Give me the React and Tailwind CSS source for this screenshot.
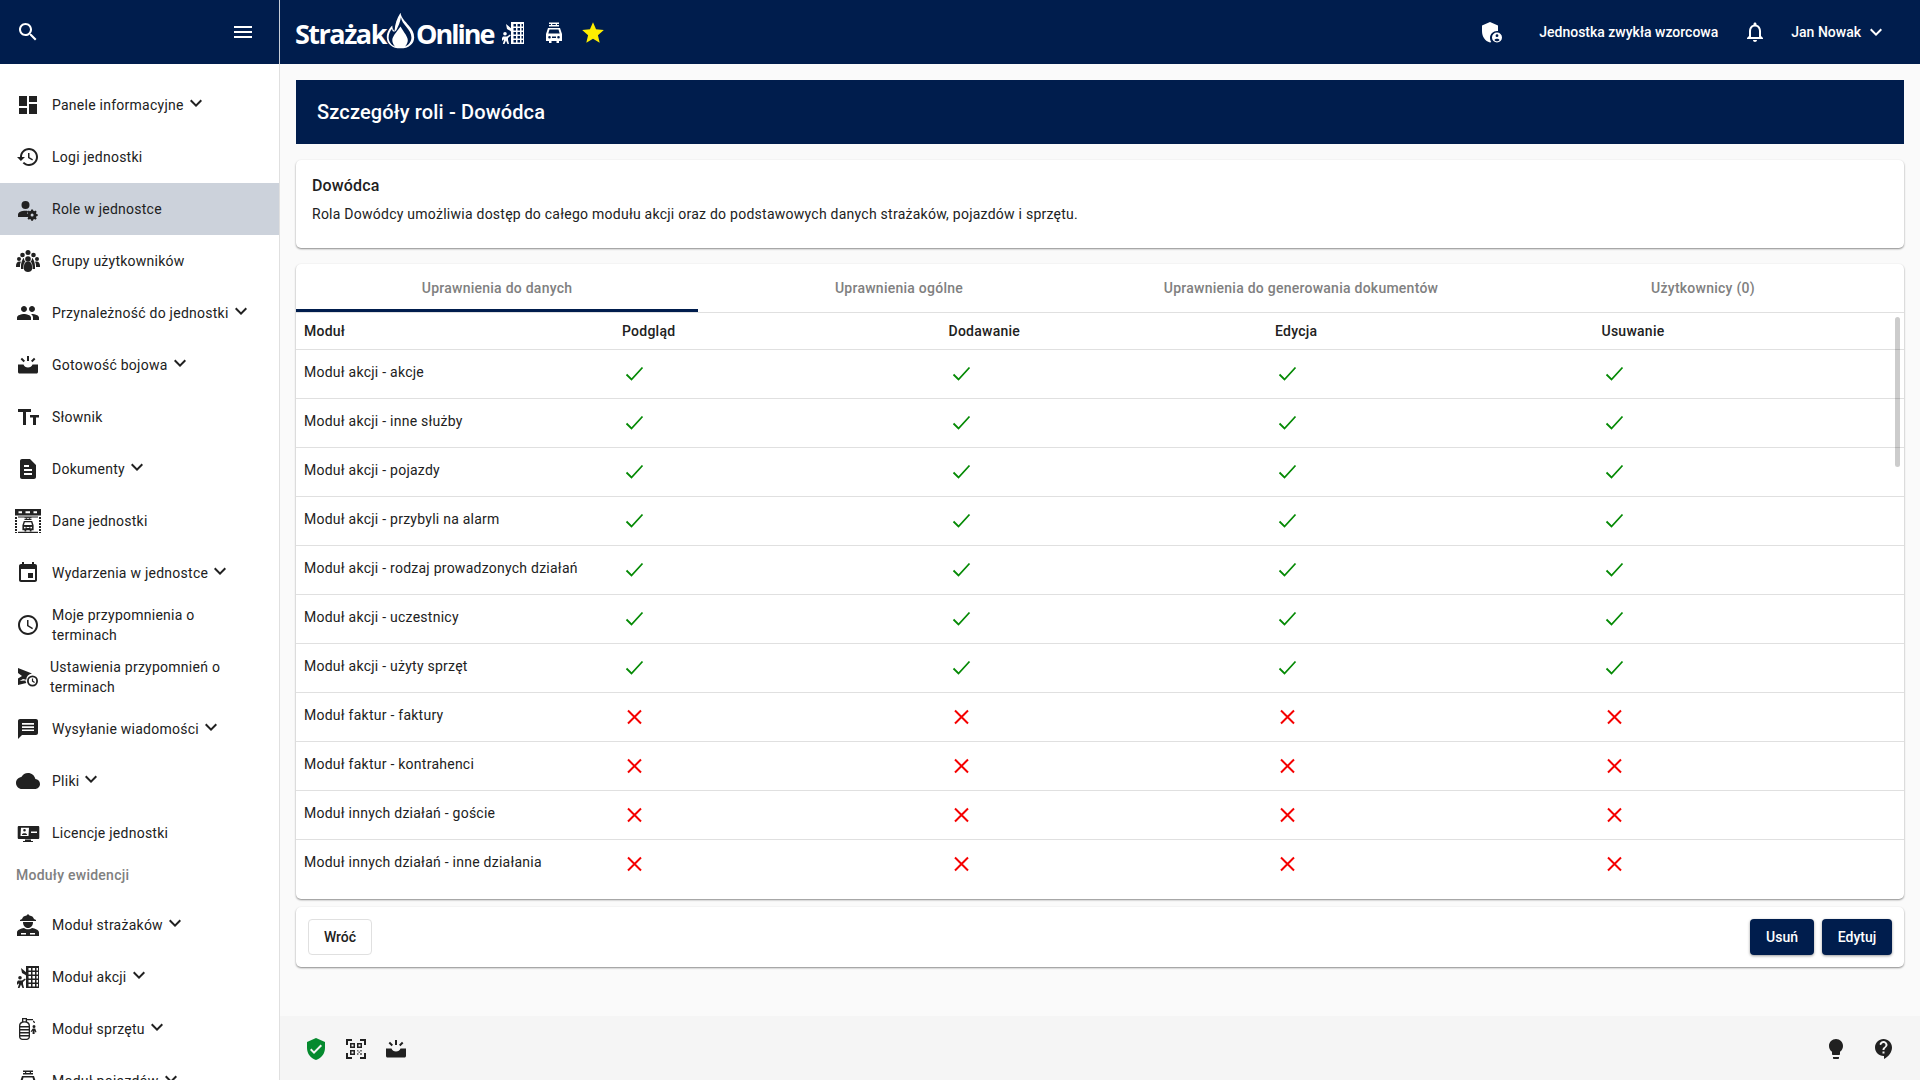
import React from "react";

const Icon = ({ size = 24, className = "", children }) => (
  <svg viewBox="0 0 24 24" width={size} height={size} fill="currentColor" className={`shrink-0 ${className}`}>
    {children}
  </svg>
);

const P = ({ d }) => <path d={d} />;

const Chevron = ({ className = "" }) => (
  <Icon className={className}>
    <P d="M16.59 8.59L12 13.17 7.41 8.59 6 10l6 6 6-6z" />
  </Icon>
);

const Alert = () => (
  <>
    <path d="M11 3h2v5h-2zM4.6 6.2l1.4-1.4 3 3-1.4 1.4zM15 7.800l3-3 1.400 1.400-3 3z" />
    <path d="M2 11.500h5.500c.6 2 2.400 3 4.500 3s3.900-1 4.500-3H22V19c0 .8-.7 1.500-1.500 1.500h-17C2.700 20.500 2 19.800 2 19z" />
  </>
);

const Truck = () => (
  <>
    <path d="M7 1.500h10v1.500H7zM7 4h10v1.500H7zM9 3h1.200v1H9zM13.800 3H15v1h-1.200z" />
    <path fillRule="evenodd" d="M6 7h12l2 6v7h-3v2h-2.500v-2h-5v2H7v-2H4v-7zm1.500 1.500L6.300 12.500h11.400L16.500 8.500zM7.500 15a1.300 1.300 0 100 2.600 1.300 1.300 0 000-2.600zm9 0a1.300 1.300 0 100 2.600 1.300 1.300 0 000-2.600zM10 15.500v1.500h4v-1.500z" />
  </>
);

const Building = () => (
  <>
    <path fillRule="evenodd" d="M10 1h13v22H10zm2.500 2v2.500H15V3zm4 0v2.500H19V3zm-4 4v2.500H15V7zm4 0v2.500H19V7zm4-4v2.500H22V3zm0 4v2.500H22V7zm-8 4v2.500H15V11zm4 0v2.500H19V11zm4 0v2.500H22V11zm-8 4v2.500H15V15zm4 0v2.500H19V15zm4 0v2.500H22V15zm-8 4v2.500H15V19zm4 0v2.500H19V19zm4 0v2.500H22V19z" />
    <path d="M4 11a1.800 1.800 0 110 3.600A1.800 1.800 0 014 11zM2 15.500h4l3-2 .8 1L7 17v2l1 4H6.500L5 19.500 3.500 23H1.800L3 19l-.5-.5L1 20v-3z" />
    <path d="M5 3l6 5 1.500 6-3-4L6 8z" />
  </>
);

const Bulb = () => <P d="M9 21c0 .55.45 1 1 1h4c.55 0 1-.45 1-1v-1H9v1zm3-19C8.14 2 5 5.14 5 9c0 2.38 1.19 4.47 3 5.74V17c0 .55.45 1 1 1h6c.55 0 1-.45 1-1v-2.260c1.810-1.270 3-3.360 3-5.740 0-3.860-3.140-7-7-7z" />;

const menuItems = [
  { label: "Panele informacyjne", more: true, icon: <P d="M3 13h8V3H3v10zm0 8h8v-6H3v6zm10 0h8V11h-8v10zm0-18v6h8V3h-8z" /> },
  { label: "Logi jednostki", icon: <P d="M13 3c-4.970 0-9 4.030-9 9H1l3.890 3.890.07.14L9 12H6c0-3.870 3.130-7 7-7s7 3.130 7 7-3.130 7-7 7c-1.930 0-3.680-.79-4.940-2.060l-1.420 1.420C8.270 19.990 10.510 21 13 21c4.970 0 9-4.030 9-9s-4.030-9-9-9zm-1 5v5l4.280 2.540.72-1.210-3.500-2.080V8H12z" /> },
  {
    label: "Role w jednostce",
    active: true,
    icon: (
      <>
        <circle cx="9.500" cy="8" r="4" />
        <path d="M2 20v-2.500c0-2.300 3.500-3.800 7.500-3.800 1 0 1.700.1 2.500.2-.4.900-.6 1.900-.6 2.900 0 1.200.3 2.200.8 3.200z" />
        <path fillRule="evenodd" d="M17 12.500l.3 1.300 1 .4 1.100-.7 1.300 1.300-.7 1.100.4 1 1.300.3v1.800l-1.300.3-.4 1 .7 1.100-1.300 1.300-1.100-.7-1 .4-.3 1.300h-1.800l-.3-1.300-1-.4-1.100.7-1.300-1.300.7-1.100-.4-1-1.300-.3v-1.800l1.300-.3.4-1-.7-1.100 1.300-1.300 1.100.7 1-.4.3-1.300zm-.9 3.900a1.500 1.500 0 100 3 1.500 1.500 0 000-3z" />
      </>
    ),
  },
  {
    label: "Grupy użytkowników",
    icon: (
      <>
        <circle cx="12" cy="3.500" r="2.500" />
        <circle cx="6.500" cy="6" r="2.300" />
        <circle cx="17.500" cy="6" r="2.300" />
        <circle cx="3" cy="10" r="2" />
        <circle cx="21" cy="10" r="2" />
        <circle cx="12" cy="10" r="2.800" />
        <path d="M0 17c0-2.500 1.200-4.500 3.500-4.500.8 0 1.200.2 1.500.4-.8 1-1 2.600-1 4.100v1H0zM24 17c0-2.500-1.200-4.500-3.500-4.500-.8 0-1.200.2-1.500.4.8 1 1 2.600 1 4.100v1h4zM5 17c0-3 1.500-7.500 3-8 0 2 .5 3 1.500 3.500C8 13.500 7.500 15.500 7.500 18v2H5zM19 17c0-3-1.500-7.500-3-8 0 2-.5 3-1.500 3.500 1.500 1 2 3 2 5.500v2H19zM8 17c0-2.500 1.500-4.500 4-4.500s4 2 4 4.500v3.500c0 1-2 2.500-4 2.500s-4-1.500-4-2.500z" />
      </>
    ),
  },
  { label: "Przynależność do jednostki", more: true, icon: <P d="M16 11c1.660 0 2.990-1.340 2.990-3S17.660 5 16 5c-1.660 0-3 1.340-3 3s1.340 3 3 3zm-8 0c1.660 0 2.990-1.340 2.990-3S9.660 5 8 5C6.340 5 5 6.340 5 8s1.340 3 3 3zm0 2c-2.330 0-7 1.170-7 3.500V19h14v-2.500c0-2.330-4.670-3.500-7-3.500zm8 0c-.29 0-.62.02-.97.05 1.160.84 1.970 1.970 1.970 3.450V19h6v-2.500c0-2.330-4.670-3.500-7-3.500z" /> },
  { label: "Gotowość bojowa", more: true, icon: <Alert /> },
  { label: "Słownik", icon: <P d="M2 4h13v3h-5v13H7V7H2zm12 6h9v2.500h-3V20h-3v-7.500h-3z" /> },
  { label: "Dokumenty", more: true, icon: <path fillRule="evenodd" d="M6 2h8l6 6v12c0 1.100-.9 2-2 2H6c-1.100 0-2-.9-2-2V4c0-1.100.9-2 2-2zM8 8v2h5V8zm0 4v2h8v-2zm0 4v2h8v-2z" /> },
  {
    label: "Dane jednostki",
    icon: (
      <>
        <path fillRule="evenodd" d="M-1 0h26v6.500H-1zM2.500 2.200v2h3.500v-2zm7 0v2h4.500v-2zm8 0v2h3.500v-2z" />
        <path d="M-1 8h2v2H-1zM-1 11h2v2H-1zM-1 14h2v2H-1zM-1 17h2v2H-1zM-1 20h2v2H-1zM-1 23h2v1H-1zM23 8h2v2h-2zM23 11h2v2h-2zM23 14h2v2h-2zM23 17h2v2h-2zM23 20h2v2h-2zM23 23h2v1h-2z" />
        <path d="M2 7.500h20v1H2zM2 22.800h20v1.200H2z" />
        <g transform="translate(3.600 7.200) scale(.7)">
          <Truck />
        </g>
      </>
    ),
  },
  { label: "Wydarzenia w jednostce", more: true, icon: <P d="M17 12h-5v5h5v-5zM16 1v2H8V1H6v2H5c-1.110 0-1.990.9-1.990 2L3 19c0 1.100.89 2 2 2h14c1.100 0 2-.9 2-2V5c0-1.100-.9-2-2-2h-1V1h-2zm3 18H5V8h14v11z" /> },
  { label: "Moje przypomnienia o terminach", wrap: true, icon: <P d="M11.990 2C6.470 2 2 6.480 2 12s4.470 10 9.990 10C17.520 22 22 17.520 22 12S17.520 2 11.990 2zM12 20c-4.420 0-8-3.580-8-8s3.580-8 8-8 8 3.580 8 8-3.580 8-8 8zm.5-13H11v6l5.250 3.150.75-1.230-4.500-2.670z" /> },
  {
    label: "Ustawienia przypomnień o terminach",
    wrap: true,
    shift: true,
    icon: (
      <>
        <path d="M2 3l14 5.500a7 7 0 00-5.800 6.200L7 14l-5 3v-3.500L6 11 2 8z" />
        <path fillRule="evenodd" d="M16.500 10.500a5.500 5.500 0 110 11 5.500 5.500 0 010-11zm0 1.800a3.700 3.700 0 100 7.400 3.700 3.700 0 000-7.400zm-.6 1.200h1.200v2.300l1.800 1.100-.6 1-2.400-1.400z" />
        <path d="M2 16l7.500-.5c.1.900.3 1.800.8 2.500L2 20z" />
      </>
    ),
  },
  { label: "Wysyłanie wiadomości", more: true, icon: <path fillRule="evenodd" d="M20 2H4c-1.100 0-1.990.9-1.990 2L2 22l4-4h14c1.100 0 2-.9 2-2V4c0-1.100-.9-2-2-2zM6 6v1.700h12V6zm0 3.200v1.700h12V9.200zm0 3.200v1.700h12v-1.700z" /> },
  { label: "Pliki", more: true, icon: <P d="M19.350 10.040C18.670 6.590 15.640 4 12 4 9.110 4 6.600 5.640 5.350 8.040 2.340 8.360 0 10.910 0 14c0 3.310 2.690 6 6 6h13c2.760 0 5-2.240 5-5 0-2.640-2.050-4.780-4.650-4.960z" /> },
  {
    label: "Licencje jednostki",
    icon: (
      <>
        <path fillRule="evenodd" d="M3 5h19c.8 0 1.300.5 1.300 1.300v10.400c0 .8-.5 1.300-1.300 1.300H3c-.8 0-1.300-.5-1.300-1.300V6.300C1.700 5.500 2.200 5 3 5zm2 1.800l-.5 8.200h8l.5-8.200zm10 3.700V12h6v-1.500z" />
        <path d="M9 18.500h6V20h2v1H7v-1h2z" />
        <path d="M8.500 8a1.300 1.300 0 110 2.600 1.300 1.300 0 010-2.600zM6 13.500c.5-1.800 4.500-1.800 5 0v.5H6z" />
      </>
    ),
  },
];

const moduleItems = [
  {
    label: "Moduł strażaków",
    icon: (
      <>
        <path d="M12 1l1.500 1.500c2.300.3 3.900 1.500 4.500 3.500l2 1v1H4V7l2-1c.6-2 2.200-3.200 4.500-3.500z" />
        <path d="M7 9h10c0 3.500-2 6-5 6s-5-2.500-5-6z" />
        <path fillRule="evenodd" d="M8 15c1 .8 2.500 1.300 4 1.300s3-.5 4-1.300c3 .5 7 2 7 4.500V23H1v-3.500C1 17 5 15.500 8 15zm-3 5v1.500h5V20zm9 0v1.500h5V20z" />
      </>
    ),
  },
  { label: "Moduł akcji", icon: <Building /> },
  {
    label: "Moduł sprzętu",
    icon: (
      <>
        <path fillRule="evenodd" d="M6 1h5v3.500c2.200.8 3 2.500 3 4.500v10.500c0 2-1.500 3.500-3.500 3.500h-4C4.500 23 3 21.500 3 19.500V9c0-2 .8-3.700 3-4.500zm1.300 1.300v2h2.400v-2zM8.500 5.500C6 5.500 4.300 7 4.300 9h8.400c0-2-1.700-3.500-4.200-3.500zM4.300 10.500V12h8.400v-1.500zm0 3V15h8.400v-1.500zm0 3V18h8.400v-1.500zm0 3c0 1.300.9 2.200 2.200 2.200h4c1.300 0 2.200-.9 2.200-2.200z" />
        <path d="M11 2h6v1.200h-6zM17 3.500c1.500.5 2 1.500 2 2.500h-1.200c0-.6-.4-1.100-.8-1.300zM18 8a1.500 1.500 0 110 3 1.500 1.500 0 010-3zm-1.200 3.500h2.400l1.300 3.500-1.100.4-.8-2V17h-2v-3.500l-1 1.500-1-.6z" />
      </>
    ),
  },
  { label: "Moduł pojazdów", icon: <Truck /> },
];

const MenuItem = ({ item }) => (
  <div className={`flex h-[52px] items-center pl-4 ${item.active ? "bg-[#ccd2db]" : ""}`}>
    <Icon className="overflow-visible text-[#212121]">{item.icon}</Icon>
    <span
      className={`text-[14px] leading-5 text-[#212121] ${item.shift ? "ml-[10px]" : "ml-3"} ${item.wrap ? "w-[180px]" : ""}`}
    >
      {item.label}
    </span>
    {item.more && <Chevron className="-mt-1 text-[#212121]" />}
  </div>
);

const rows = [
  ["Moduł akcji - akcje", true],
  ["Moduł akcji - inne służby", true],
  ["Moduł akcji - pojazdy", true],
  ["Moduł akcji - przybyli na alarm", true],
  ["Moduł akcji - rodzaj prowadzonych działań", true],
  ["Moduł akcji - uczestnicy", true],
  ["Moduł akcji - użyty sprzęt", true],
  ["Moduł faktur - faktury", false],
  ["Moduł faktur - kontrahenci", false],
  ["Moduł innych działań - goście", false],
  ["Moduł innych działań - inne działania", false],
];

const Yes = () => (
  <svg viewBox="0 0 24 24" width="24" height="24" fill="none" stroke="#058a05" strokeWidth="1.800">
    <path d="M4.500 12.500l5 5 11-12" />
  </svg>
);

const No = () => (
  <svg viewBox="0 0 24 24" width="24" height="24" fill="none" stroke="#f50000" strokeWidth="2">
    <path d="M6 5.500l13 13M19 5.500l-13 13" />
  </svg>
);

const tabs = ["Uprawnienia do danych", "Uprawnienia ogólne", "Uprawnienia do generowania dokumentów", "Użytkownicy (0)"];

const gridCols = "grid grid-cols-[326px_326.5px_326.5px_326.5px_1fr]";

const cardClass = "rounded-[5px] bg-white shadow-[0_1px_2px_rgba(0,0,0,0.45)]";

function App() {
  return (
    <div className="flex h-screen flex-col overflow-hidden bg-[#fafafa] text-[14px] tracking-[0.25px] text-[#212121] [font-family:Roboto,sans-serif]">
      <header className="flex h-16 shrink-0 items-center bg-[#001d4d] tracking-normal text-white">
        <div className="flex h-full w-[280px] shrink-0 items-center justify-between border-r border-[#c8ced8] pl-4 pr-6">
          <Icon>
            <P d="M15.500 14h-.79l-.28-.27C15.410 12.590 16 11.110 16 9.500 16 5.910 13.090 3 9.500 3S3 5.910 3 9.500 5.910 16 9.500 16c1.610 0 3.090-.59 4.230-1.570l.27.28v.79l5 4.990L20.490 19l-4.990-5zm-6 0C7.010 14 5 11.990 5 9.500S7.010 5 9.500 5 14 7.010 14 9.500 11.990 14 9.500 14z" />
          </Icon>
          <Icon>
            <P d="M3 18h18v-2H3v2zm0-5h18v-2H3v2zm0-7v2h18V6H3z" />
          </Icon>
        </div>
        <div className="ml-[15px] mt-[2px] flex items-center">
          <span className="w-[90px] text-[27px] font-bold leading-none tracking-[-1.5px] [font-family:'Open_Sans',sans-serif]">Strażak</span>
          <svg viewBox="0 0 34 40" width="31" height="38" fill="white" className="-mt-1 shrink-0">
            <path fillRule="evenodd" d="M17 0c1 6 5 9 9 14 3.500 4 6 8 6 13 0 7-6 12-15 12S2 34 2 27c0-6 3-10 6-13 0 3 1 5 2.500 6C11 12 13 6 17 0zm.5 5c-1 6-3 10-4.500 13-1 2-2.500 3-4 2.500-1-.5-1-2-1.200-3C5.500 20 4 23.500 4 27c0 4 2.500 8 7 10-2-2-3-4.500-3-7 0-4 4-8 9-15 4 7 8 11 8 15 0 2.500-1 5-3 7 4.500-2 7-6 7-10 0-4-2.500-8-5.500-11.500C20.500 12 18 9 17.500 5z" />
          </svg>
          <span className="w-[76px] text-[27px] font-bold leading-none tracking-[-2px] [font-family:'Open_Sans',sans-serif]">Online</span>
          <Icon className="ml-[9px]">
            <Building />
          </Icon>
          <Icon className="ml-[17px]">
            <Truck />
          </Icon>
          <Icon size={26} className="ml-[14px] text-[#ffee00]">
            <P d="M12 17.270L18.180 21l-1.640-7.030L22 9.240l-7.190-.61L12 2 9.190 8.630 2 9.240l5.460 4.730L5.820 21z" />
          </Icon>
        </div>
        <div className="ml-auto flex items-center pr-[32px] font-medium">
          <Icon>
            <path fillRule="evenodd" d="M11 2l8 3.500V11c-.3 0-.6-.1-1-.1-3.800 0-7 3.200-7 7 0 1.500.5 3 1.300 4.100l-1.300.5C6 21.200 3 16.500 3 11V5.500zm7 10.500a5 5 0 110 10 5 5 0 010-10zm0 1.800a1.400 1.400 0 100 2.800 1.400 1.400 0 000-2.800zm-2.600 5.600c.5.800 1.500 1.300 2.600 1.300s2.100-.5 2.600-1.300c-.5-.7-1.500-1.100-2.600-1.100s-2.100.4-2.600 1.100z" />
          </Icon>
          <span className="ml-[36px]">Jednostka zwykła wzorcowa</span>
          <Icon className="ml-[25px]">
            <P d="M12 22c1.100 0 2-.9 2-2h-4c0 1.100.9 2 2 2zm6-6v-5c0-3.070-1.630-5.640-4.500-6.320V4c0-.83-.67-1.500-1.500-1.500s-1.500.67-1.500 1.500v.68C7.640 5.360 6 7.920 6 11v5l-2 2v1h16v-1l-2-2zm-2 1H8v-6c0-2.480 1.510-4.500 4-4.500s4 2.020 4 4.500v6z" />
          </Icon>
          <span className="ml-[24px]">Jan Nowak</span>
          <Chevron className="ml-[3px]" />
        </div>
      </header>

      <div className="flex min-h-0 flex-1">
        <aside className="w-[280px] shrink-0 overflow-hidden border-r border-[#e0e0e0] bg-white pt-[15px]">
          {menuItems.map((item) => (
            <MenuItem key={item.label} item={item} />
          ))}
          <div className="h-10 pl-4 pt-[6px] text-[14px] font-medium leading-5 text-[#808080]">Moduły ewidencji</div>
          {moduleItems.map((item) => (
            <MenuItem key={item.label} item={{ ...item, more: true }} />
          ))}
        </aside>

        <main className="flex min-w-0 flex-1 flex-col">
          <div className="flex-1 px-4 pt-4">
            <div className="flex h-16 items-center bg-[#001d4d] pl-[21px] text-[20px] font-medium tracking-[0.15px] text-white">Szczegóły roli - Dowódca</div>

            <section className={`mt-4 h-[88px] px-4 pt-4 ${cardClass}`}>
              <h2 className="text-[16px] font-medium leading-5 tracking-[0.15px]">Dowódca</h2>
              <p className="mt-2 leading-5">Rola Dowódcy umożliwia dostęp do całego modułu akcji oraz do podstawowych danych strażaków, pojazdów i sprzętu.</p>
            </section>

            <section className={`relative mt-4 h-[635px] overflow-hidden ${cardClass}`}>
              <div className="grid h-[49px] grid-cols-4 border-b border-[#e0e0e0]">
                {tabs.map((tab, i) => (
                  <div
                    key={tab}
                    className={`flex h-[48px] items-center justify-center font-medium text-[#808080] ${i === 0 ? "border-b-[3px] border-[#001d4d] pt-[3px]" : ""}`}
                  >
                    {tab}
                  </div>
                ))}
              </div>
              <div className={`${gridCols} h-[37px] items-center border-b border-[#e0e0e0] font-medium`}>
                <div className="pl-2">Moduł</div>
                <div>Podgląd</div>
                <div>Dodawanie</div>
                <div>Edycja</div>
                <div>Usuwanie</div>
              </div>
              {rows.map(([name, allowed], i) => (
                <div key={name} className={`${gridCols} h-[49px] ${i < rows.length - 1 ? "border-b border-[#e0e0e0]" : ""}`}>
                  <div className="pl-2 pt-3 leading-5">{name}</div>
                  {[0, 1, 2, 3].map((col) => (
                    <div key={col} className="pt-3">
                      {allowed ? <Yes /> : <No />}
                    </div>
                  ))}
                </div>
              ))}
              <div className="absolute right-1 top-[53px] h-[150px] w-[5px] rounded bg-black/20" />
            </section>

            <section className={`mt-2 flex h-[60px] items-center justify-between px-3 font-medium tracking-normal ${cardClass}`}>
              <button className="h-9 w-16 rounded border border-[#e0e0e0] bg-white">Wróć</button>
              <div className="flex gap-2 text-white">
                <button className="h-9 w-16 rounded bg-[#001d4d] shadow-[0_1px_3px_rgba(0,0,0,0.4)]">Usuń</button>
                <button className="h-9 w-[70px] rounded bg-[#001d4d] shadow-[0_1px_3px_rgba(0,0,0,0.4)]">Edytuj</button>
              </div>
            </section>
          </div>

          <footer className="flex h-16 shrink-0 items-center justify-between bg-[#f5f5f5] pl-[24px] pr-[24px] pt-[2px]">
            <div className="flex items-center gap-4">
              <Icon className="text-[#058a2e]">
                <path fillRule="evenodd" d="M12 1l9 4v6c0 5.550-3.840 10.740-9 12-5.160-1.260-9-6.450-9-12V5zm-2 16l8-8-1.410-1.420L10 14.170l-2.590-2.580L6 13z" />
              </Icon>
              <Icon>
                <path d="M2 2h6v2H4v4H2zM16 2h6v6h-2V4h-4zM2 16h2v4h4v2H2zM20 16h2v6h-6v-2h4z" />
                <path fillRule="evenodd" d="M6 6h5v5H6zm1.500 1.500v2h2v-2zM13 6h5v5h-5zm1.500 1.500v2h2v-2zM6 13h5v5H6zm1.500 1.500v2h2v-2z" />
                <path opacity=".6" d="M13 13h1.500v1.500H13zM16 13h2v1.500h-2zM14.500 14.500H16V16h-1.500zM13 16h1.500v2H13zM16 16h2v2h-2z" />
              </Icon>
              <Icon>
                <Alert />
              </Icon>
            </div>
            <div className="flex items-center gap-6">
              <Icon>
                <Bulb />
              </Icon>
              <Icon>
                <P d="M11.500 2C6.810 2 3 5.810 3 10.500S6.810 19 11.500 19h.5v3c4.860-2.340 8-7 8-11.500C20 5.810 16.190 2 11.500 2zm1 14.500h-2v-2h2v2zm.4-4.780c-.01.01-.02.03-.03.05-.05.08-.1.16-.14.24-.02.03-.03.07-.04.11-.03.07-.06.14-.08.21-.07.21-.1.43-.1.68H10.500c0-.51.08-.94.2-1.300 0-.01 0-.02.01-.03.01-.04.04-.06.05-.1.06-.16.13-.3.22-.44.03-.05.07-.1.1-.15.03-.04.05-.09.08-.12l.01.01c.84-1.100 2.210-1.440 2.320-2.680.09-.98-.61-1.930-1.570-2.130-1.040-.22-1.980.39-2.300 1.280-.14.36-.47.65-.88.65h-.2c-.6 0-1.040-.59-.87-1.170.55-1.820 2.370-3.090 4.430-2.790 1.690.25 3.040 1.640 3.330 3.330.44 2.440-1.630 3.030-2.530 4.350z" />
              </Icon>
            </div>
          </footer>
        </main>
      </div>
    </div>
  );
}

export default App;
